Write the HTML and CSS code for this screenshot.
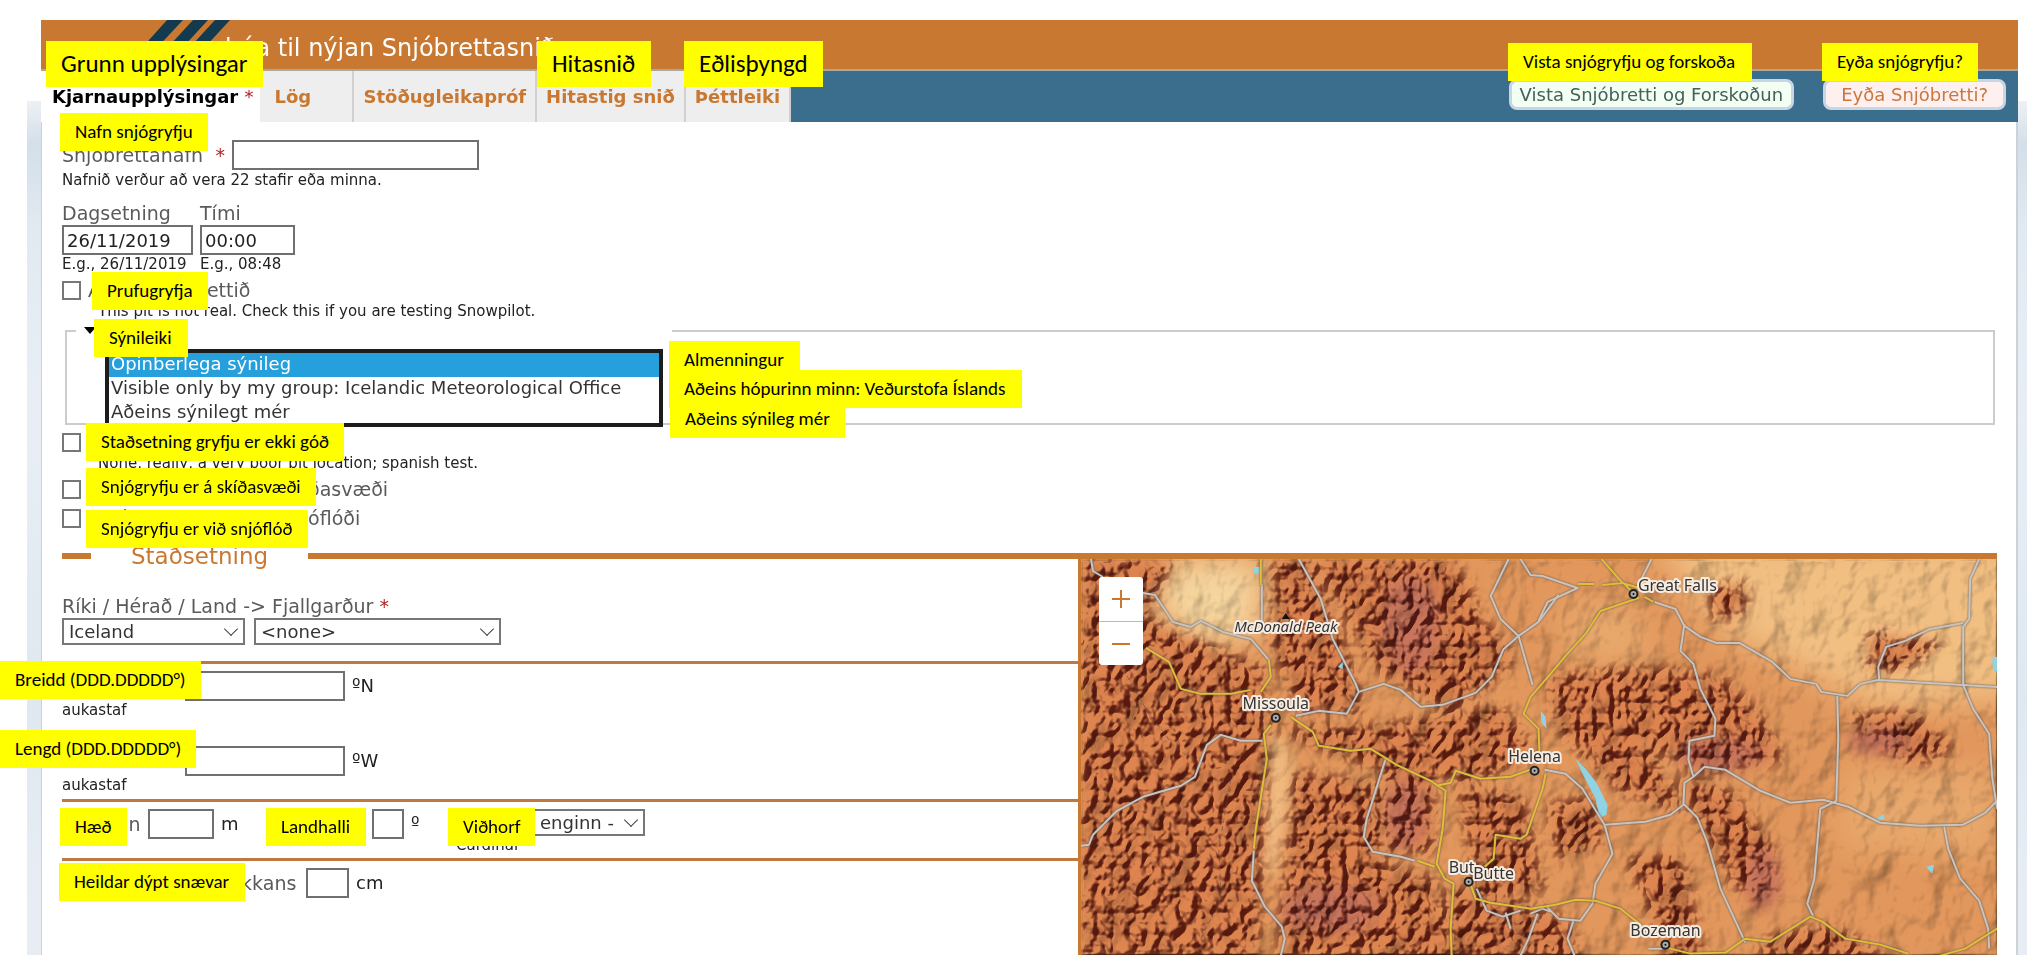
FILE: index.html
```html
<!DOCTYPE html>
<html lang="is">
<head>
<meta charset="utf-8">
<title>Snjóbrettasnið</title>
<link rel="stylesheet" href="styles.css">
</head>
<body>
<div class="backdrop">
<main class="sheet">
  <header class="titlebar">
    <svg class="logo" width="90" height="49" viewBox="0 0 90 49" aria-hidden="true">
      <path d="M27 0H43L0 46V30ZM53 0H68L23 49H8ZM75 0H90L45 49H30Z" fill="#143a50"/>
    </svg>
    <h1>búa til nýjan Snjóbrettasnið</h1>
  </header>
  <nav class="tabs">
    <a href="#core" class="tab active">Kjarnaupplýsingar <span class="req">*</span></a>
    <a href="#layers" class="tab short">Lög</a>
    <a href="#stability" class="tab">Stöðugleikapróf</a>
    <a href="#temperature" class="tab">Hitastig snið</a>
    <a href="#density" class="tab">Þéttleiki</a>
    <div class="actions">
      <button type="button" class="save">Vista Snjóbretti og Forskoðun</button>
      <button type="button" class="delete">Eyða Snjóbretti?</button>
    </div>
  </nav>
  <form class="form" id="core">
    <div class="row name-row">
      <label for="name">Snjóbrettanafn <span class="req">*</span></label>
      <input type="text" id="name" class="w-name">
    </div>
    <p class="help">Nafnið verður að vera 22 stafir eða minna.</p>
    <div class="row dates">
      <div><label for="date">Dagsetning</label><input type="text" id="date" class="w-date" value="26/11/2019"><p class="help">E.g., 26/11/2019</p></div>
      <div><label for="time">Tími</label><input type="text" id="time" class="w-time" value="00:00"><p class="help">E.g., 08:48</p></div>
    </div>
    <div class="row check"><input type="checkbox" id="practice"><label for="practice">Æfing snjóbrettið</label></div>
    <p class="help indent">This pit is not real. Check this if you are testing Snowpilot.</p>
    <fieldset class="visibility">
      <legend><svg width="12" height="8" viewBox="0 0 12 8" aria-hidden="true"><path d="M0 0H12L6 7Z"/></svg><label for="vis">Sýnileiki</label></legend>
      <select id="vis" size="3">
        <option selected>Opinberlega sýnileg</option>
        <option>Visible only by my group: Icelandic Meteorological Office</option>
        <option>Aðeins sýnilegt mér</option>
      </select>
    </fieldset>
    <div class="row check"><input type="checkbox" id="poor"><label for="poor">Léleg staðsetning</label></div>
    <p class="help indent">None, really, a very poor pit location; spanish test.</p>
    <div class="row check"><input type="checkbox" id="ski"><label for="ski">Snjóbrettið er inni á skíðasvæði</label></div>
    <div class="row check"><input type="checkbox" id="aval"><label for="aval">Snjóbrettið er nærri snjóflóði</label></div>

    <fieldset class="location">
      <legend>Staðsetning</legend>
      <div class="split">
        <div class="fields">
          <label for="state" class="block">Ríki / Hérað / Land -&gt; Fjallgarður <span class="req">*</span></label>
          <div class="row selects">
            <span class="drop w-state"><select id="state"><option>Iceland</option></select></span>
            <span class="drop w-range"><select aria-label="Fjallgarður"><option>&lt;none&gt;</option></select></span>
          </div>
          <div class="group coords">
            <div class="row"><label for="lat" class="w-coordlabel">Breidd</label><input type="text" id="lat" class="w-coord"><span>ºN</span></div>
            <p class="help">aukastaf</p>
            <div class="row second"><label for="lng" class="w-coordlabel">Lengd</label><input type="text" id="lng" class="w-coord"><span>ºW</span></div>
            <p class="help">aukastaf</p>
          </div>
          <div class="group terrain">
            <div class="row first"><label for="elev">Hækkun</label><input type="text" id="elev" class="w-elev"><span>m</span></div>
            <div class="row slope"><label for="slope">Halli</label><input type="text" id="slope" class="w-slope"><span>º</span></div>
            <div>
              <div class="row aspect"><label for="aspect">Átt</label><span class="drop w-aspect"><select id="aspect"><option>enginn -</option></select></span></div>
              <p class="help">Cardinal</p>
            </div>
          </div>
          <div class="group depth">
            <div class="row"><label for="depth" class="w-depthlabel">Heildardýpt snjópakkans</label><input type="text" id="depth" class="w-depth"><span>cm</span></div>
          </div>
        </div>
        <div class="map">
          <svg class="terrain-map" viewBox="0 0 917 397" preserveAspectRatio="xMinYMin slice" role="img" aria-label="Kort">
            <defs>
              <filter id="blur" x="-30%" y="-30%" width="160%" height="160%"><feGaussianBlur stdDeviation="16"/></filter>
              <filter id="blurS" x="-50%" y="-50%" width="200%" height="200%"><feGaussianBlur stdDeviation="7"/></filter>
              <filter id="rough" x="0" y="0" width="100%" height="100%" color-interpolation-filters="sRGB">
                <feTurbulence type="turbulence" baseFrequency="0.06 0.045" numOctaves="3" seed="11" result="n"/>
                <feColorMatrix in="n" values="0 0 0 0 0 0 0 0 0 0 0 0 0 0 0 1 1 0 0 0"/>
                <feGaussianBlur stdDeviation="0.9"/>
                <feDiffuseLighting surfaceScale="9" diffuseConstant="1.35" lighting-color="#fff"><feDistantLight azimuth="225" elevation="48"/></feDiffuseLighting>
                <feComponentTransfer><feFuncR type="linear" slope=".6" intercept=".4"/><feFuncG type="linear" slope=".8" intercept=".2"/><feFuncB type="linear" slope=".8" intercept=".2"/></feComponentTransfer>
              </filter>
              <filter id="soft" x="0" y="0" width="100%" height="100%" color-interpolation-filters="sRGB">
                <feTurbulence type="fractalNoise" baseFrequency="0.03 0.022" numOctaves="4" seed="5" result="n"/>
                <feColorMatrix in="n" values="0 0 0 0 0 0 0 0 0 0 0 0 0 0 0 1 0 0 0 0"/>
                <feGaussianBlur stdDeviation="0.8"/>
                <feDiffuseLighting surfaceScale="7" diffuseConstant="1.12" lighting-color="#fff"><feDistantLight azimuth="225" elevation="62"/></feDiffuseLighting>
              </filter>
              <g id="ranges" stroke-linecap="round" stroke-linejoin="round">
                <path d="M0 0H90L60 60 130 90 180 110 185 170 175 397H0Z"/>
                <path d="M195 0H225L260 80 280 150 220 150 195 90Z"/>
                <path d="M235 0H370L400 60 430 100 400 130 370 150 300 110 265 50Z"/>
                <path d="M200 170 300 170 420 150 450 190 400 220 300 210Z"/>
                <path d="M215 215 300 230 300 310 350 320 370 397H200Z"/>
                <path d="M310 210H350V290H310ZM380 230 440 240 460 330 400 340Z"/>
                <path d="M470 120 560 110 640 120 680 160 700 200 620 210 560 180 600 250 540 230 480 170Z"/>
                <path d="M470 250 510 240 520 280 480 300Z"/>
                <path d="M600 220 650 235 690 290 690 340 660 330 630 280Z"/>
                <path d="M550 300 600 300 620 397 590 397Z"/>
                <path d="M630 30 665 25 665 50 635 60ZM790 75 860 85 820 110 790 110ZM770 160 830 155 870 190 830 205Z"/>
                <path d="M370 330 480 360 500 397H370ZM690 380 750 370 800 397H680Z"/>
              </g>
              <mask id="m" maskUnits="userSpaceOnUse" x="0" y="0" width="917" height="397"><rect width="917" height="397" fill="#000"/><use href="#ranges" fill="#fff" stroke="#fff" stroke-width="8" filter="url(#blurS)"/></mask>
            </defs>
            <rect width="917" height="397" fill="#e2975c"/>
            <g filter="url(#blur)">
              <path d="M570 -20H940V140L800 150 720 110 640 70Z" fill="#f2bf82"/>
              <path d="M480 40 560 50 570 110 490 100ZM760 210H917V300L760 290Z" fill="#e8a86c"/>
              <path d="M90 0H180V75L120 85 70 50Z" fill="#f6d69e"/>
            </g>
            <path d="M187 175 205 180 215 230 195 320 180 310Z" fill="#f0ba80" filter="url(#blurS)"/>
            <use href="#ranges" fill="#dd8450" filter="url(#blurS)"/>
            <g fill="#c8745c" filter="url(#blurS)"><ellipse cx="325" cy="255" rx="20" ry="36"/><ellipse cx="682" cy="320" rx="18" ry="32"/><ellipse cx="800" cy="182" rx="34" ry="14"/><ellipse cx="330" cy="65" rx="30" ry="50"/><ellipse cx="250" cy="350" rx="50" ry="24"/><ellipse cx="640" cy="195" rx="45" ry="16"/></g>
            <rect class="shade" width="917" height="397" filter="url(#soft)" opacity=".6"/>
            <g mask="url(#m)" class="shade"><rect width="917" height="397" filter="url(#rough)"/></g>
            <g fill="#8fd3e4"><path d="M495 200 505 210 516 224 527 246 526 256 519 259 515 240 505 221ZM460 152 465 158 466 170 461 164Z"/><path d="M173 8h6v6h-6zM257 108l5-5v7zM796 260l8-5v6h-6zM846 308l8-2-2 9zM912 98h5v14h-4z"/></g>
            <g class="road road-grey">
              <path d="M10 0 12 12 22 18M62 34 74 36 92 63 110 68 120 62 142 73 170 80M181 62V25M170 80 188 101M218 0 240 40 252 80 275 125 278 133 266 155 238 152 215 157M278 133 303 125 320 131 340 148 362 146 395 134 411 118 423 90 438 77 458 63 478 36"/>
              <path d="M428 0 410 37 420 60 438 77 452 126M440 0 450 16 462 17 497 29 467 43 458 62M571 0 556 30M574 43 595 50 604 67 620 78 636 84 659 84 692 103 710 120 736 125 741 133 767 137 780 125 798 121 883 126 917 128M604 65 600 92 613 105 620 130 635 160 634 177 609 182 608 201 613 218 604 224 603 245 617 259 627 284 640 330 665 384"/>
              <path d="M899 0 890 20 889 60 883 68V126L893 150 909 175 912 218 917 250M883 64 850 70 825 82 806 88 798 108 799 121M757 137 758 178 756 242 740 250 734 320 727 345 733 358M613 218 624 208 645 211 680 232 710 244 743 241 768 248 800 264 840 267 883 266 905 254 917 242M864 268 868 290 880 320 899 342 908 370 909 390"/>
              <path d="M464 211 485 215 502 230 524 266 532 295 515 325 512 345 500 362 478 360 466 348M524 266 565 263 590 256 603 246M182 182 160 182 140 176 126 186 114 218 100 227 62 238 36 252 12 276 8 286 0 287M305 200 286 260 283 278 292 293 320 298 334 302M173 292 171 322 184 348 201 368 204 380 200 397M396 330 406 352 422 358 440 352M450 355 462 350 470 353M457 355 448 380 440 397M425 354 430 370M493 362 487 380 494 397M568 390H582"/>
            </g>
            <g class="road road-yellow">
              <path d="M180 0V26M65 89 88 103 100 130 120 135 150 135 170 131M188 101 190 118 180 133M210 158 232 173 238 187 270 192 290 190 316 206 350 222 365 232 362 270 356 305 364 320 373 325 370 370 371 397M356 227 370 224 375 212 400 220 430 218 452 210M190 166 183 175 186 200 175 270 173 290M337 302 354 308M562 30 542 24 521 0M514 25H497M522 26 543 24 558 39 520 52 505 75 485 97 470 115 450 138 443 155 458 170 459 198"/>
              <path d="M564 38 573 43M465 215 462 230 446 276 440 280 415 276 413 300 404 308M390 326 395 340 410 344 450 350 475 346 495 341 515 342 540 350 560 366 568 374M586 389 610 395 645 394 665 380 690 383 730 358 742 363 765 380 800 386 828 395M860 397 885 390 917 370"/>
            </g>
            <path d="M42 110 65 150 95 190 112 200M150 220 138 290 140 340 120 380" class="border"/>
            <g class="town"><circle cx="195" cy="159" r="4"/><circle cx="454" cy="212" r="4"/><circle cx="553" cy="35" r="4"/><circle cx="388" cy="323" r="4"/><circle cx="585" cy="386" r="4"/></g>
            <g class="dots"><circle cx="195" cy="159" r="1"/><circle cx="454" cy="212" r="1"/><circle cx="553" cy="35" r="1"/><circle cx="388" cy="323" r="1"/><circle cx="585" cy="386" r="1"/></g>
            <path d="M201 60 205 54 209 60Z" fill="#111"/>
            <g class="place" text-anchor="middle">
              <text x="205" y="73" class="peak">McDonald Peak</text><text x="195" y="150">Missoula</text><text x="454" y="203">Helena</text><text x="597" y="32">Great Falls</text><text x="381" y="314">But</text><text x="413" y="320">Butte</text><text x="585" y="377">Bozeman</text>
            </g>
          </svg>
          <div class="zoomer">
            <button type="button" aria-label="Þysja inn"><svg width="20" height="20" viewBox="0 0 20 20"><path d="M10 1V19M1 10H19"/></svg></button>
            <button type="button" aria-label="Þysja út"><svg width="20" height="20" viewBox="0 0 20 20"><path d="M1 10H19"/></svg></button>
          </div>
        </div>
      </div>
    </fieldset>
  </form>
</main>
</div>

<aside class="notes">
  <p class="note big n-core">Grunn upplýsingar</p>
  <p class="note big n-temp">Hitasnið</p>
  <p class="note big n-dens">Eðlisþyngd</p>
  <p class="note n-save">Vista snjógryfju og forskoða</p>
  <p class="note n-del">Eyða snjógryfju?</p>
  <p class="note n-name">Nafn snjógryfju</p>
  <p class="note n-prac">Prufugryfja</p>
  <p class="note n-vis">Sýnileiki</p>
  <p class="note n-pub">Almenningur</p>
  <p class="note n-me">Aðeins sýnileg mér</p>
  <p class="note n-group">Aðeins hópurinn minn: Veðurstofa Íslands</p>
  <p class="note n-poor">Staðsetning gryfju er ekki góð</p>
  <p class="note n-ski">Snjógryfju er á skíðasvæði</p>
  <p class="note n-aval">Snjógryfju er við snjóflóð</p>
  <p class="note n-lat">Breidd (DDD.DDDDD°)</p>
  <p class="note n-lng">Lengd (DDD.DDDDD°)</p>
  <p class="note n-elev">Hæð</p>
  <p class="note n-slope">Landhalli</p>
  <p class="note n-aspect">Viðhorf</p>
  <p class="note n-depth">Heildar dýpt snævar</p>
</aside>
</body>
</html>
```
FILE: styles.css
```css
* { box-sizing: border-box; }
body {
  margin: 0;
  position: relative;
  min-height: 100vh;
  overflow: hidden;
  background: #fff;
  color: #222;
  font-family: Verdana, "DejaVu Sans", sans-serif;
  font-size: 18px;
  line-height: 24px;
}
h1, p { margin: 0; font-weight: normal; }
input, select, button { font: inherit; color: inherit; margin: 0; }

.backdrop {
  min-height: 100vh;
  margin-left: 27px;
  padding: 20px 9px 0 14px;
  display: flex;
  background: linear-gradient(#fff 101px, transparent 101px),
    linear-gradient(#eef1f4 100px, #d3dfe9 145px, #e2eaf1 230px, #e8eef4 420px, #dfe8f0 700px, #e8edf3 900px);
}
.sheet { flex: 1; min-width: 0; display: flex; flex-direction: column; background: #fff; }

.titlebar {
  display: flex;
  align-items: center;
  height: 49px;
  padding-left: 99px;
  background: #c87830;
  color: #fff;
}
.titlebar h1 { font-size: 24px; line-height: 30px; margin-left: -5px; padding-top: 6px; }
.titlebar .logo { flex: none; }

.tabs { display: flex; height: 53px; background: #3b6e8c; border-top: 2px solid #a9a9a0; }
.tab {
  padding: 14px 9px 0;
  background: #eee;
  border-right: 2px solid #d0d0d0;
  color: #c87830;
  font-size: 18px;
  font-weight: bold;
  text-decoration: none;
  white-space: nowrap;
}
.tab.active { background: #fff; color: #000; border-right: 0; padding: 14px 7px 0 11px; }
.tab.short { min-width: 94px; padding-left: 14px; }
.req { color: #b22222; font-weight: normal; }
.actions { margin-left: auto; display: flex; gap: 29px; padding: 8px 12px 0 0; align-items: flex-start; }
.actions button { height: 31px; border: 3px solid #c8d5e2; border-radius: 8px; padding: 0 8px; white-space: nowrap; line-height: 22px; }
.save { background: #f4fff4; color: #44605c; }
.actions .delete { background: #fff0f0; color: #c87840; padding: 0 15px; }

.form {
  flex: 1;
  display: flex;
  flex-direction: column;
  padding: 18px 19px 0 20px;
  border: solid #ccd2d8;
  border-width: 0 2px 0 1px;
}
label { color: #5a5a5a; font-size: 19px; }
.row { display: flex; align-items: center; }
.row, .help, .block { flex: none; }
input[type="text"] { height: 30px; border: 2px solid #707070; background: #fff; padding: 0 3px; min-width: 0; }
.help { font-size: 15px; line-height: 18px; color: #222; }
.indent { margin-left: 36px; }
.name-row { gap: 7px; margin-bottom: 1px; }
.name-row label { width: 163px; display: flex; justify-content: space-between; white-space: nowrap; }
.w-name { width: 247px; }
.dates { gap: 7px; margin-top: 12px; }
.dates label, .dates input { display: block; }
.dates .help { white-space: nowrap; }
.dates > div:first-child { width: 131px; }
.w-date { width: 131px; }
.w-time { width: 95px; }
.check { gap: 7px; margin-top: 5px; height: 24px; }
.check input { appearance: none; width: 19px; height: 19px; border: 2px solid #777; background: #fff; }

.visibility { margin: 2px 2px 0 3px; padding: 9px 38px 0; height: 103px; border: 2px solid #ccc; min-width: 0; }
.visibility legend { width: 596px; margin-left: -29px; padding: 0 8px; height: 18px; display: flex; align-items: center; gap: 8px; line-height: 18px; }
.visibility legend label { font-size: 15px; }
.visibility select {
  display: block;
  width: 558px;
  height: 78px;
  padding: 0;
  overflow: hidden;
  border: 4px solid #1c1c1c;
  border-radius: 0;
  background: #fff;
  outline: 0;
}
.visibility option { height: 24px; min-height: 24px; padding: 0 2px; line-height: 22px; color: #333; }
.visibility option:checked { color: #fff; background: #269fdd linear-gradient(#269fdd, #269fdd); }

.location { flex: 1; display: flex; flex-direction: column; margin: 11px 0 0; padding: 0; border: 0; border-top: 6px solid #c87830; min-width: 0; }
.location > legend { margin-left: 29px; padding: 0 40px; font-size: 23px; line-height: 30px; color: #c87830; }
.split { flex: 1; display: grid; grid-template-columns: 525fr 475fr; }
.fields { padding-top: 23px; }
.block { display: block; }
.selects { gap: 9px; }
.drop { position: relative; display: block; }
.drop select { appearance: none; width: 100%; height: 27px; padding: 0 5px; border: 2px solid #777; border-radius: 0; background: #fff; color: #333; }
.drop::after {
  content: "";
  position: absolute;
  right: 9px;
  top: 6px;
  width: 9px;
  height: 9px;
  border: solid #444;
  border-width: 0 1px 1px 0;
  transform: rotate(45deg);
  pointer-events: none;
}
.w-state { width: 183px; }
.w-range { width: 247px; }
.group { margin-top: 4px; border-top: 3px solid #c07840; padding-top: 7px; }
.group .row { gap: 7px; }
.coords { margin-top: 16px; padding-bottom: 1px; }
.second { margin-top: 27px; }
.coords label { align-self: flex-start; line-height: 18px; }
.w-coordlabel { width: 116px; }
.w-coord { width: 160px; }
.terrain { display: flex; align-items: flex-start; }
.first { width: 204px; }
.first label { width: 79px; white-space: nowrap; }
.w-elev { width: 66px; }
.slope { width: 190px; }
.slope label { width: 99px; }
.w-slope { width: 32px; }
.aspect label { width: 64px; }
.w-aspect { width: 118px; }
.w-aspect select { padding-left: 11px; }
.depth .row label { width: 237px; white-space: nowrap; }
.w-depth { width: 43px; }

.map { position: relative; margin-top: -12px; border-left: 3px solid #c87830; overflow: hidden; }
.terrain-map { position: absolute; inset: 0; width: 100%; height: 100%; }
.shade { mix-blend-mode: multiply; }
.road path { fill: none; stroke-width: 2; stroke-linejoin: round; }
.road { filter: drop-shadow(0 0 1px #555); }
.road-grey { stroke: #c9c4c0; }
.road-yellow { stroke: #e3bd35; }
.border { fill: none; stroke: #5a4a4a; stroke-width: 1; stroke-dasharray: 5 3; opacity: .6; }
.town { fill: #aaa; stroke: #222; stroke-width: 2; }
.dots { fill: #111; }
.place { font-family: "Noto Sans", sans-serif; font-size: 16px; fill: #333; stroke: #f6ece2; stroke-width: 4; stroke-linejoin: round; paint-order: stroke; }
.peak { font-size: 15px; font-style: italic; }
.zoomer { position: absolute; left: 18px; top: 18px; width: 44px; border-radius: 4px; overflow: hidden; background: #fff; }
.zoomer button { display: flex; align-items: center; justify-content: center; width: 44px; height: 44px; border: 0; background: #fff; }
.zoomer button + button { border-top: 1px solid #bbb; }
.zoomer path { stroke: #c87830; stroke-width: 2; }

.note {
  position: absolute;
  height: 38px;
  padding: 0 0 0 15px;
  background: #ff0;
  color: #000;
  font-family: Carlito, Lato, sans-serif;
  font-size: 19px;
  line-height: 38px;
  white-space: nowrap;
}
.note.big { height: 46px; line-height: 46px; font-size: 25px; }
.n-core { left: 46px; top: 41px; width: 217px; }
.n-temp { left: 537px; top: 41px; width: 114px; }
.n-dens { left: 684px; top: 41px; width: 139px; }
.n-save { right: 275px; top: 43px; width: 244px; }
.n-del { right: 49px; top: 43px; width: 156px; }
.n-name { left: 60px; top: 113px; width: 148px; }
.n-prac { left: 92px; top: 272px; width: 116px; }
.n-vis { left: 94px; top: 319px; width: 94px; }
.n-pub { left: 669px; top: 341px; width: 131px; }
.n-group { left: 669px; top: 370px; width: 353px; }
.n-me { left: 670px; top: 400px; width: 175px; }
.n-poor { left: 86px; top: 423px; width: 258px; }
.n-ski { left: 86px; top: 468px; width: 230px; }
.n-aval { left: 86px; top: 510px; width: 222px; }
.n-lat { left: 0; top: 661px; width: 201px; }
.n-lng { left: 0; top: 730px; width: 196px; }
.n-elev { left: 60px; top: 808px; width: 67px; }
.n-slope { left: 266px; top: 808px; width: 100px; }
.n-aspect { left: 448px; top: 808px; width: 87px; }
.n-depth { left: 59px; top: 863px; width: 186px; }
```
